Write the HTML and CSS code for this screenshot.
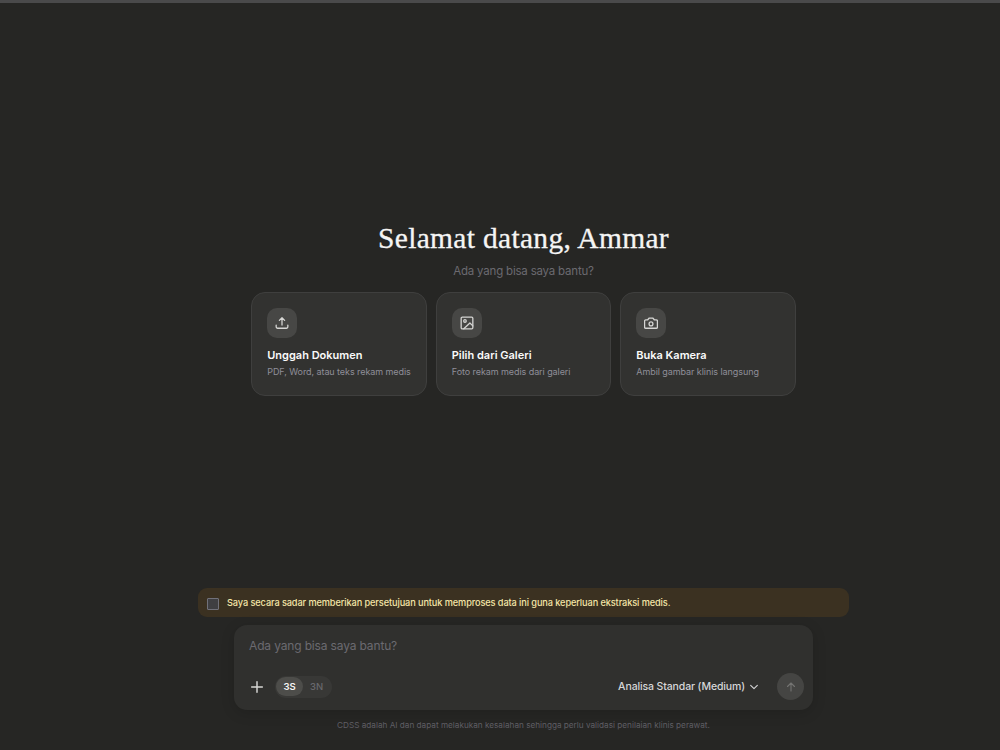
FILE: index.html
```
<!DOCTYPE html>
<html lang="id">
<head>
    <meta charset="UTF-8">
    <meta name="viewport" content="width=device-width, initial-scale=1.0">
    <title>CDSS</title>
    <link rel="stylesheet" href="styles.css">
</head>
<body>
    <main class="chat">
        <section class="welcome">
            <h1>Selamat datang, Ammar</h1>
            <p class="subtitle">Ada yang bisa saya bantu?</p>
            <div class="cards">
                <button class="card">
                    <span class="card-icon">
                        <svg viewBox="0 0 24 24"><path d="M12 15.5V3M7.500 7.500 12 3l4.500 4.500M2 15.500v3a2.500 2.500 0 0 0 2.500 2.500h15a2.500 2.500 0 0 0 2.500-2.500v-3"/></svg>
                    </span>
                    <span class="card-title">Unggah Dokumen</span>
                    <span class="card-text">PDF, Word, atau teks rekam medis</span>
                </button>
                <button class="card">
                    <span class="card-icon">
                        <svg viewBox="0 0 24 24"><rect x="2" y="2" width="20" height="20" rx="2"/><circle cx="8.5" cy="8.5" r="2.2"/><path d="M6.5 22 17 12l5 5"/></svg>
                    </span>
                    <span class="card-title">Pilih dari Galeri</span>
                    <span class="card-text">Foto rekam medis dari galeri</span>
                </button>
                <button class="card">
                    <span class="card-icon">
                        <svg viewBox="0 0 24 24"><path d="M15 3.5H9l-2.600 3H3a2 2 0 0 0-2 2V19a2 2 0 0 0 2 2h18a2 2 0 0 0 2-2V8.500a2 2 0 0 0-2-2h-3.400z"/><circle cx="12" cy="13.5" r="3.3"/></svg>
                    </span>
                    <span class="card-title">Buka Kamera</span>
                    <span class="card-text">Ambil gambar klinis langsung</span>
                </button>
            </div>
        </section>

        <footer class="bottom">
            <label class="consent">
                <input type="checkbox">
                <span>Saya secara sadar memberikan persetujuan untuk memproses data ini guna keperluan ekstraksi medis.</span>
            </label>
            <div class="composer">
                <div class="prompt">Ada yang bisa saya bantu?</div>
                <div class="toolbar">
                    <button class="add" aria-label="Tambah">
                        <svg viewBox="0 0 24 24"><path d="M12 4v16M4 12h16"/></svg>
                    </button>
                    <div class="mode">
                        <button class="active">3S</button>
                        <button>3N</button>
                    </div>
                    <button class="model">
                        <span>Analisa Standar (Medium)</span>
                        <svg viewBox="0 0 24 24"><path d="m4 8 8 8 8-8"/></svg>
                    </button>
                    <button class="send" aria-label="Kirim">
                        <svg viewBox="0 0 24 24"><path d="M12 20V4M5 11l7-7 7 7"/></svg>
                    </button>
                </div>
            </div>
            <p class="note">CDSS adalah AI dan dapat melakukan kesalahan sehingga perlu validasi penilaian klinis perawat.</p>
        </footer>
    </main>
</body>
</html>
```
FILE: styles.css
```
* {
    box-sizing: border-box;
}

body {
    margin: 0;
    height: 100vh;
    padding-left: 47px;
    border-top: 3px solid #4a4a4b;
    background-color: #262624;
    color: #f5f5f4;
    font-family: Inter, "Liberation Sans", sans-serif;
    overflow: hidden;
}

h1, p {
    margin: 0;
}

button {
    padding: 0;
    border: 0;
    background: none;
    color: inherit;
    font: inherit;
    white-space: nowrap;
}

svg {
    display: block;
    fill: none;
    stroke: currentColor;
    stroke-width: 2.2;
    stroke-linecap: round;
    stroke-linejoin: round;
}

.chat {
    display: flex;
    flex-direction: column;
    align-items: center;
    justify-content: space-between;
    height: 100%;
    padding: 218px 0 19px;
}

.welcome {
    display: flex;
    flex-direction: column;
    align-items: center;
}

h1 {
    font-family: "Liberation Serif", serif;
    font-size: 29.5px;
    font-weight: 400;
    line-height: 34px;
    letter-spacing: 0.32px;
    white-space: nowrap;
    -webkit-text-stroke: 0.3px currentColor;
}

.subtitle {
    margin-top: 8px;
    color: #6b6a70;
    font-size: 11.5px;
    line-height: 16px;
    letter-spacing: -0.2px;
}

.cards {
    display: grid;
    grid-template-columns: repeat(3, 175.5px);
    gap: 9px;
    margin-top: 13px;
}

.card {
    display: flex;
    flex-direction: column;
    align-items: flex-start;
    height: 104px;
    padding: 15px;
    border: 1px solid #3f3f3e;
    border-radius: 14px;
    background-color: #323230;
    text-align: left;
}

.card-icon {
    display: flex;
    align-items: center;
    justify-content: center;
    width: 30px;
    height: 30px;
    border-radius: 10px;
    background-color: #474745;
    color: #d6d6d4;
}

.card-icon svg {
    width: 14px;
    height: 14px;
}

.card-title {
    margin-top: 9px;
    color: #fafafa;
    font-size: 11px;
    font-weight: 600;
    line-height: 16px;
}

.card-text {
    margin-top: 2px;
    color: #8f8e98;
    font-size: 9px;
    line-height: 13px;
    letter-spacing: -0.07px;
}

.bottom {
    display: flex;
    flex-direction: column;
    align-items: center;
}

.consent {
    display: flex;
    align-items: center;
    gap: 8px;
    width: 651px;
    height: 29px;
    padding: 0 9px;
    border-radius: 9px;
    background-color: #3b3121;
    color: #f5e6a8;
    font-size: 9.2px;
    font-weight: 500;
    letter-spacing: -0.095px;
}

.consent input {
    appearance: none;
    width: 12px;
    height: 12px;
    margin: 2px 0 0;
    border: 1px solid #71717a;
    border-radius: 1px;
    background-color: #3f3f42;
}

.composer {
    display: flex;
    flex-direction: column;
    justify-content: space-between;
    width: 579px;
    height: 85px;
    margin-top: 8px;
    padding: 12px 9px 10px 15px;
    border-radius: 13px;
    background-color: #30302e;
    box-shadow: 0 3px 14px rgba(0, 0, 0, 0.15);
}

.prompt {
    color: #6b6a70;
    font-size: 12px;
    line-height: 17px;
    letter-spacing: -0.15px;
}

.toolbar {
    display: flex;
    align-items: center;
    height: 27px;
}

.add {
    color: #d6d6d4;
}

.add svg {
    width: 16px;
    height: 16px;
}

.mode {
    display: flex;
    align-items: center;
    width: 57px;
    height: 22px;
    margin-left: 10px;
    padding: 1px;
    border-radius: 11px;
    background-color: #383836;
}

.mode button {
    width: 27px;
    height: 19px;
    border-radius: 10px;
    color: #68686d;
    font-size: 9.5px;
    font-weight: 500;
}

.mode .active {
    background-color: #4d4d4a;
    color: #f5f5f4;
    font-weight: 600;
}

.model {
    display: flex;
    align-items: center;
    gap: 4px;
    margin-left: auto;
    color: #d6d6d8;
    font-size: 10.5px;
    font-weight: 500;
    letter-spacing: -0.12px;
}

.model svg {
    width: 10px;
    height: 10px;
    stroke-width: 2.6;
}

.send {
    display: flex;
    align-items: center;
    justify-content: center;
    width: 27px;
    height: 27px;
    margin-left: 18px;
    border-radius: 50%;
    background-color: #454543;
    color: #747472;
}

.send svg {
    width: 12px;
    height: 12px;
}

.note {
    margin-top: 9px;
    color: #5f5e64;
    font-size: 8.2px;
    line-height: 12px;
    white-space: nowrap;
}
```
